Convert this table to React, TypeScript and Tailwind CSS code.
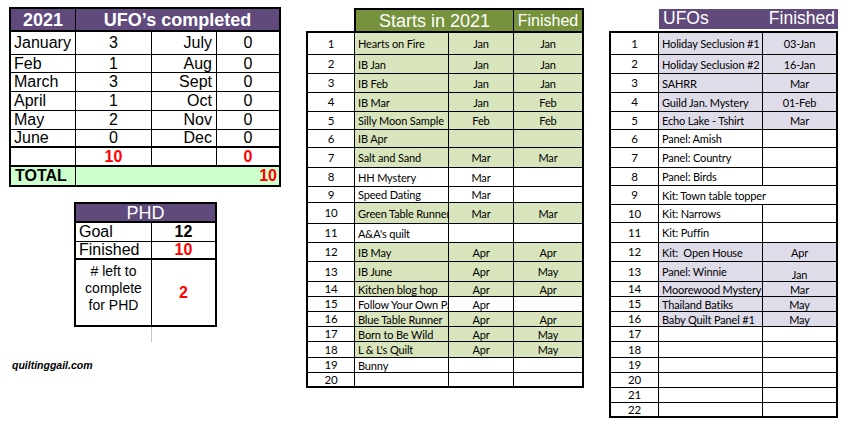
const MONTHS = [
  { a: "January", an: "3", b: "July", bn: "0", h: "h-[23px]" },
  { a: "Feb", an: "1", b: "Aug", bn: "0", h: "h-[18px]" },
  { a: "March", an: "3", b: "Sept", bn: "0", h: "h-[19px]" },
  { a: "April", an: "1", b: "Oct", bn: "0", h: "h-[19px]" },
  { a: "May", an: "2", b: "Nov", bn: "0", h: "h-[19px]" },
  { a: "June", an: "0", b: "Dec", bn: "0", h: "h-[18px]" },
];

const STARTS = [
  { name: "Hearts on Fire", start: "Jan", fin: "Jan", g: true, h: "h-[22px]" },
  { name: "IB Jan", start: "Jan", fin: "Jan", g: true, h: "h-[19px]" },
  { name: "IB Feb", start: "Jan", fin: "Jan", g: true, h: "h-[19px]" },
  { name: "IB Mar", start: "Jan", fin: "Feb", g: true, h: "h-[19px]" },
  { name: "Silly Moon Sample", start: "Feb", fin: "Feb", g: true, h: "h-[18px]" },
  { name: "IB Apr", start: "", fin: "", g: true, h: "h-[18px]" },
  { name: "Salt and Sand", start: "Mar", fin: "Mar", g: true, h: "h-[20px]" },
  { name: "HH Mystery", start: "Mar", fin: "", g: false, h: "h-[19px]" },
  { name: "Speed Dating", start: "Mar", fin: "", g: false, h: "h-[16px]" },
  { name: "Green Table Runner", start: "Mar", fin: "Mar", g: true, h: "h-[21px]" },
  { name: "A&A's quilt", start: "", fin: "", g: false, h: "h-[19px]" },
  { name: "IB May", start: "Apr", fin: "Apr", g: true, h: "h-[19px]" },
  { name: "IB June", start: "Apr", fin: "May", g: true, h: "h-[20px]" },
  { name: "Kitchen blog hop", start: "Apr", fin: "Apr", g: true, h: "h-[15px]" },
  { name: "Follow Your Own Path", start: "Apr", fin: "", g: false, h: "h-[15px]" },
  { name: "Blue Table Runner", start: "Apr", fin: "Apr", g: true, h: "h-[15px]" },
  { name: "Born to Be Wild", start: "Apr", fin: "May", g: true, h: "h-[15px]" },
  { name: "L & L's Quilt", start: "Apr", fin: "May", g: true, h: "h-[16px]" },
  { name: "Bunny", start: "", fin: "", g: false, h: "h-[15px]" },
  { name: "", start: "", fin: "", g: false, h: "h-[13px]" },
];

const UFOS = [
  { name: "Holiday Seclusion #1", fin: "03-Jan", p: true, h: "h-[22px]" },
  { name: "Holiday Seclusion #2", fin: "16-Jan", p: true, h: "h-[19px]" },
  { name: "SAHRR", fin: "Mar", p: true, h: "h-[19px]" },
  { name: "Guild Jan. Mystery", fin: "01-Feb", p: true, h: "h-[19px]" },
  { name: "Echo Lake - Tshirt", fin: "Mar", p: true, h: "h-[18px]" },
  { name: "Panel: Amish", fin: "", p: false, h: "h-[18px]" },
  { name: "Panel: Country", fin: "", p: false, h: "h-[20px]" },
  { name: "Panel: Birds", fin: "", p: false, h: "h-[18px]" },
  { name: "Kit: Town table topper", fin: "", p: false, h: "h-[19px]", span: true },
  { name: "Kit: Narrows", fin: "", p: false, h: "h-[18px]" },
  { name: "Kit: Puffin", fin: "", p: false, h: "h-[20px]" },
  { name: "Kit:  Open House", fin: "Apr", p: true, h: "h-[19px]" },
  { name: "Panel: Winnie", fin: "Jan", p: true, h: "h-[20px]", low: true },
  { name: "Moorewood Mystery", fin: "Mar", p: true, h: "h-[15px]" },
  { name: "Thailand Batiks", fin: "May", p: true, h: "h-[15px]" },
  { name: "Baby Quilt Panel #1", fin: "May", p: true, h: "h-[15px]" },
  { name: "", fin: "", p: false, h: "h-[15px]" },
  { name: "", fin: "", p: false, h: "h-[16px]" },
  { name: "", fin: "", p: false, h: "h-[15px]" },
  { name: "", fin: "", p: false, h: "h-[15px]" },
  { name: "", fin: "", p: false, h: "h-[15px]" },
  { name: "", fin: "", p: false, h: "h-[13px]" },
];

function LeftColumn() {
  return (
    <div className="ml-[9px] mt-[7px] w-[272px] flex flex-col font-['Liberation_Sans',Arial,sans-serif] leading-none">
      {/* UFO's completed */}
      <div className="border-2 border-black">
        <div className="h-[23px] flex border-b-2 border-black bg-[#604a7b] text-white font-bold text-[18px]">
          <div className="w-[65px] border-r border-black flex items-center justify-center">2021</div>
          <div className="flex-1 flex items-center justify-center">UFO’s completed</div>
        </div>
        {MONTHS.map((m, i) => (
          <div
            key={m.a}
            className={`${m.h} flex border-black text-[16px] ${i === 5 ? "border-b-2" : "border-b"}`}
          >
            <div className="w-[65px] border-r border-black pl-[3px] flex items-center">{m.a}</div>
            <div className="w-[76px] border-r border-black flex items-center justify-center">{m.an}</div>
            <div className="w-[65px] border-r border-black pr-[4px] flex items-center justify-end">{m.b}</div>
            <div className="flex-1 flex items-center justify-center">{m.bn}</div>
          </div>
        ))}
        <div className="h-[19px] flex border-b-2 border-black text-[16px] font-bold text-[#ff0000]">
          <div className="w-[65px] border-r border-black" />
          <div className="w-[76px] border-r border-black flex items-center justify-center">10</div>
          <div className="w-[65px] border-r border-black" />
          <div className="flex-1 flex items-center justify-center">0</div>
        </div>
        <div className="h-[18px] flex bg-[#ccffcc] text-[16px] font-bold">
          <div className="w-[65px] border-r border-black pl-[4px] flex items-center">TOTAL</div>
          <div className="flex-1 flex items-center justify-end pr-[2px] text-[#ff0000]">10</div>
        </div>
      </div>

      {/* PHD */}
      <div className="mt-[15px] ml-[65px] w-[143px] border-2 border-black">
        <div className="h-[19px] flex items-center justify-center border-b-2 border-black bg-[#604a7b] text-white text-[18px]">
          PHD
        </div>
        <div className="h-[19px] flex border-b border-black text-[16px]">
          <div className="w-[76px] border-r border-black pl-[3px] flex items-center">Goal</div>
          <div className="flex-1 flex items-center justify-center font-bold">12</div>
        </div>
        <div className="h-[18px] flex border-b-2 border-black text-[16px]">
          <div className="w-[76px] border-r border-black pl-[3px] flex items-center">Finished</div>
          <div className="flex-1 flex items-center justify-center font-bold text-[#ff0000]">10</div>
        </div>
        <div className="h-[65px] flex">
          <div className="w-[76px] border-r border-black pt-[3px] text-center text-[14px] leading-[17px]">
            # left to
            <br />
            complete
            <br />
            for PHD
          </div>
          <div className="flex-1 flex items-center justify-center font-bold text-[16px] text-[#ff0000]">2</div>
        </div>
      </div>
      <div className="ml-[142px] w-px h-[15px] bg-[#c8c8c8]" />

      <div className="mt-[17px] ml-[3px] text-[10.5px] leading-[12px] font-bold italic">quiltinggail.com</div>
    </div>
  );
}

function StartsTable() {
  return (
    <div className="ml-[25px] mt-[8px] w-[278px] flex flex-col font-['Lato',sans-serif] leading-none">
      <div className="ml-[48px] h-[23px] flex border-2 border-b-0 border-black bg-[#76923c] text-white font-['Liberation_Sans',Arial,sans-serif]">
        <div className="w-[158px] border-r border-black flex items-center justify-center text-[18px]">Starts in 2021</div>
        <div className="flex-1 flex items-center justify-center text-[16px]">Finished</div>
      </div>
      <div className="border-2 border-black text-[11px] tracking-[-0.15px]">
        {STARTS.map((r, i) => {
          const bg = r.g ? "bg-[#d8e4bc]" : "bg-white";
          return (
            <div
              key={i}
              className={`${r.h} flex border-black ${i === STARTS.length - 1 ? "" : "border-b"}`}
            >
              <div className="w-[47px] border-r border-black flex items-center justify-center text-[11.5px]">{i + 1}</div>
              <div className={`w-[94px] border-r border-black pl-[3px] flex items-center overflow-hidden whitespace-nowrap ${bg}`}>
                {r.name}
              </div>
              <div className={`w-[65px] border-r border-black flex items-center justify-center ${bg}`}>{r.start}</div>
              <div className={`flex-1 flex items-center justify-center ${bg}`}>{r.fin}</div>
            </div>
          );
        })}
      </div>
    </div>
  );
}

function UfoTable() {
  return (
    <div className="ml-[25px] mt-[9px] w-[229px] flex flex-col font-['Lato',sans-serif] leading-none">
      <div className="ml-[50px] h-[20px] flex items-center justify-between pl-[4px] pr-[3px] bg-[#604a7b] text-white text-[17.5px] font-['Liberation_Sans',Arial,sans-serif]">
        <span>UFOs</span>
        <span>Finished</span>
      </div>
      <div className="mt-[2px] border-2 border-black text-[11px] tracking-[-0.15px]">
        {UFOS.map((r, i) => {
          const bg = r.p ? "bg-[#dfdcea]" : "bg-white";
          return (
            <div
              key={i}
              className={`${r.h} flex border-black ${i === UFOS.length - 1 ? "" : "border-b"}`}
            >
              <div className="w-[48px] border-r border-black flex items-center justify-center text-[11.5px]">{i + 1}</div>
              {r.span ? (
                <div className="flex-1 pl-[3px] flex items-center whitespace-nowrap">{r.name}</div>
              ) : (
                <>
                  <div className={`w-[104px] border-r border-black pl-[3px] flex items-center overflow-hidden whitespace-pre ${bg}`}>
                    {r.name}
                  </div>
                  <div className={`flex-1 flex justify-center ${r.low ? "items-end pb-[1px]" : "items-center"} ${bg}`}>
                    {r.fin}
                  </div>
                </>
              )}
            </div>
          );
        })}
      </div>
    </div>
  );
}

export default function App() {
  return (
    <div className="w-[853px] h-[428px] bg-white flex items-start overflow-hidden text-black">
      <LeftColumn />
      <StartsTable />
      <UfoTable />
    </div>
  );
}
